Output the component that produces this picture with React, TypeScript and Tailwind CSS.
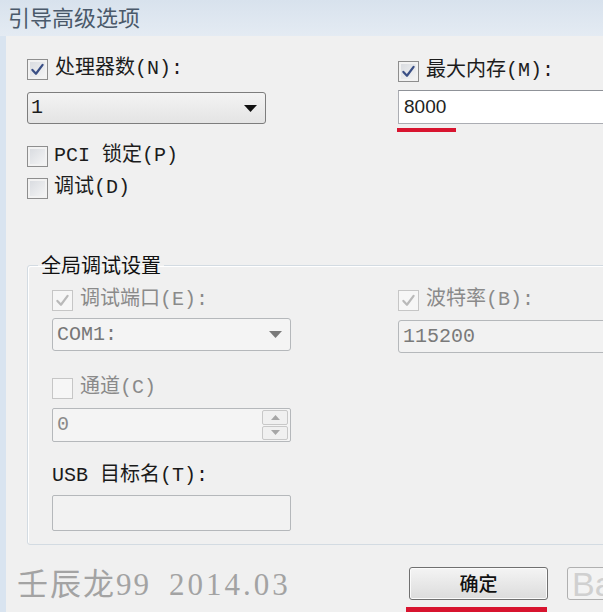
import React from "react";

const LBL = "font-['Liberation_Mono','Noto_Sans_CJK_SC',monospace]";

function Check({ checked, disabled }: { checked?: boolean; disabled?: boolean }) {
  return (
    <span
      className={
        disabled
          ? "w-[21px] h-[21px] shrink-0 border border-[#c6c6c6] bg-[#f6f6f6] flex items-center justify-center"
          : "w-[21px] h-[21px] shrink-0 border border-[#8e8e8e] bg-gradient-to-br from-[#d6d9de] to-[#f7f7f7] shadow-[inset_0_0_0_2px_#f2f2f2] flex items-center justify-center"
      }
    >
      {checked && (
        <svg viewBox="0 0 20 20" width="17" height="17">
          <path
            d="M4 10.5 L8.2 15 L16 4.5"
            fill="none"
            stroke={disabled ? "#b9b9b9" : "#3a4f85"}
            strokeWidth="2.6"
            strokeLinecap="round"
            strokeLinejoin="round"
          />
        </svg>
      )}
    </span>
  );
}

function Arrow({ color }: { color: string }) {
  return (
    <svg width="13" height="7" viewBox="0 0 13 7">
      <path d="M0 0 L13 0 L6.5 7 Z" fill={color} />
    </svg>
  );
}

export default function App() {
  return (
    <div className="w-[603px] h-[612px] overflow-hidden flex flex-col bg-[#f0f0f0]">
      {/* Title bar */}
      <div className="h-[36px] shrink-0 bg-gradient-to-b from-[#d8e2ed] to-[#e4ebf3] flex items-center pl-[8px] pb-[3px] text-[22px] text-[#4a596a] font-['Noto_Sans_CJK_SC',sans-serif]">
        引导高级选项
      </div>
      <div className="flex flex-1 min-h-0">
        <div className="w-[6px] shrink-0 bg-[#d9e4f0]" />
        <div className={`flex-1 flex flex-col pl-[21px] pt-[22px] text-[20px] text-[#1c1c1c] ${LBL}`}>
          {/* Top section */}
          <div className="flex items-start">
            <div className="w-[371px] shrink-0 flex flex-col">
              <div className="h-[22px] flex items-center gap-[7px]">
                <Check checked />
                <span className="leading-[22px]">处理器数(N):</span>
              </div>
              <div className="mt-[12px] w-[239px] h-[32px] rounded-[3px] border border-[#7d7d7d] bg-gradient-to-b from-[#f3f3f3] to-[#e4e4e4] flex items-center justify-between pl-[3px] pr-[8px]">
                <span className="leading-none">1</span>
                <Arrow color="#111" />
              </div>
              <div className="mt-[21px] h-[22px] flex items-center gap-[6px]">
                <Check />
                <span className="leading-[22px]">PCI 锁定(P)</span>
              </div>
              <div className="mt-[10px] h-[22px] flex items-center gap-[6px]">
                <Check />
                <span className="leading-[22px]">调试(D)</span>
              </div>
            </div>
            <div className="flex flex-col">
              <div className="mt-[2px] h-[22px] flex items-center gap-[7px]">
                <Check checked />
                <span className="leading-[22px]">最大内存(M):</span>
              </div>
              <div className="mt-[8px] w-[220px] h-[34px] border border-[#abadb3] border-t-[#8f9298] bg-white flex items-center pl-[5px] font-['Liberation_Sans',sans-serif] text-[19px] text-[#222]">
                8000
              </div>
              <div className="mt-[4px] -ml-[1px] w-[59px] h-[4px] bg-[#d8142f]" />
            </div>
          </div>

          {/* Group box */}
          <fieldset className="mt-[55px] w-[620px] shrink-0 border border-[#d3dbe2] rounded-[3px] shadow-[inset_1px_1px_0_#ffffff] pb-[13px]">
            <legend className="ml-[10px] px-[3px] leading-[22px] text-[20px] text-[#111] font-['Noto_Sans_CJK_SC',sans-serif]">
              全局调试设置
            </legend>
            <div className="flex items-start pl-[24px]">
              <div className="w-[346px] shrink-0 flex flex-col">
                <div className="mt-[13px] h-[22px] flex items-center gap-[7px] text-[#8a8a8a]">
                  <Check checked disabled />
                  <span className="leading-[22px]">调试端口(E):</span>
                </div>
                <div className="mt-[7px] w-[239px] h-[33px] rounded-[3px] border border-[#b5b8bb] bg-[#f4f4f4] flex items-center justify-between pl-[4px] pr-[8px] text-[#777]">
                  <span className="leading-none">COM1:</span>
                  <Arrow color="#7a7a7a" />
                </div>
                <div className="mt-[26px] h-[22px] flex items-center gap-[7px] text-[#8a8a8a]">
                  <Check disabled />
                  <span className="leading-[22px]">通道(C)</span>
                </div>
                <div className="mt-[9px] w-[239px] h-[34px] rounded-[2px] border border-[#b5b8bb] bg-[#f4f4f4] flex items-center justify-between pl-[4px] pr-[2px] text-[#8a8a8a]">
                  <span className="leading-none">0</span>
                  <div className="w-[26px] h-[30px] flex flex-col gap-[1px]">
                    <div className="flex-1 border border-[#c8c8c8] rounded-[2px] bg-[#f0f0f0] flex items-center justify-center">
                      <svg width="9" height="5" viewBox="0 0 9 5"><path d="M0 5 L9 5 L4.5 0 Z" fill="#a6a6a6" /></svg>
                    </div>
                    <div className="flex-1 border border-[#c8c8c8] rounded-[2px] bg-[#f0f0f0] flex items-center justify-center">
                      <svg width="9" height="5" viewBox="0 0 9 5"><path d="M0 0 L9 0 L4.5 5 Z" fill="#a6a6a6" /></svg>
                    </div>
                  </div>
                </div>
                <div className="mt-[23px] h-[22px] flex items-center text-[#1a1a1a]">
                  <span className="leading-[22px]">USB 目标名(T):</span>
                </div>
                <div className="mt-[8px] w-[239px] h-[36px] rounded-[2px] border border-[#b5b8bb] bg-[#f2f2f2]" />
              </div>
              <div className="flex flex-col">
                <div className="mt-[13px] h-[22px] flex items-center gap-[7px] text-[#8a8a8a]">
                  <Check checked disabled />
                  <span className="leading-[22px]">波特率(B):</span>
                </div>
                <div className="mt-[9px] w-[240px] h-[33px] rounded-[3px] border border-[#b5b8bb] bg-[#f2f2f2] flex items-center pl-[4px] text-[#7a7a7a]">
                  <span className="leading-none">115200</span>
                </div>
              </div>
            </div>
          </fieldset>

          {/* Footer */}
          <div className="mt-[22px] flex items-start">
            <div className="-ml-[10px] w-[392px] shrink-0 h-[34px] flex items-center text-[31px] tracking-[2px] text-[#a3a3a3] font-['Liberation_Serif','Noto_Sans_CJK_SC',serif] leading-none whitespace-pre">
              <span>壬辰龙</span>
              <span>99</span>
              <span className="ml-[18px] tracking-[3px]">2014.03</span>
            </div>
            <div className="flex flex-col">
              <div className="w-[139px] h-[33px] rounded-[3px] border border-[#707070] bg-gradient-to-b from-[#f4f4f4] to-[#dcdcdc] shadow-[inset_0_0_0_1px_#fbfbfb] flex items-center justify-center text-[19px] text-[#111] font-['Noto_Sans_CJK_SC',sans-serif] font-medium">
                确定
              </div>
              <div className="mt-[7px] -ml-[3px] w-[141px] h-[6px] bg-[#d8142f]" />
            </div>
            <div className="ml-[19px] w-[80px] h-[33px] rounded-[3px] border border-[#b0b0b0] bg-[#f3f3f3] flex items-center pl-[4px] text-[34px] text-[#d0d0d0] font-['Liberation_Sans',sans-serif] leading-none">
              Ba
            </div>
          </div>
        </div>
      </div>
    </div>
  );
}
